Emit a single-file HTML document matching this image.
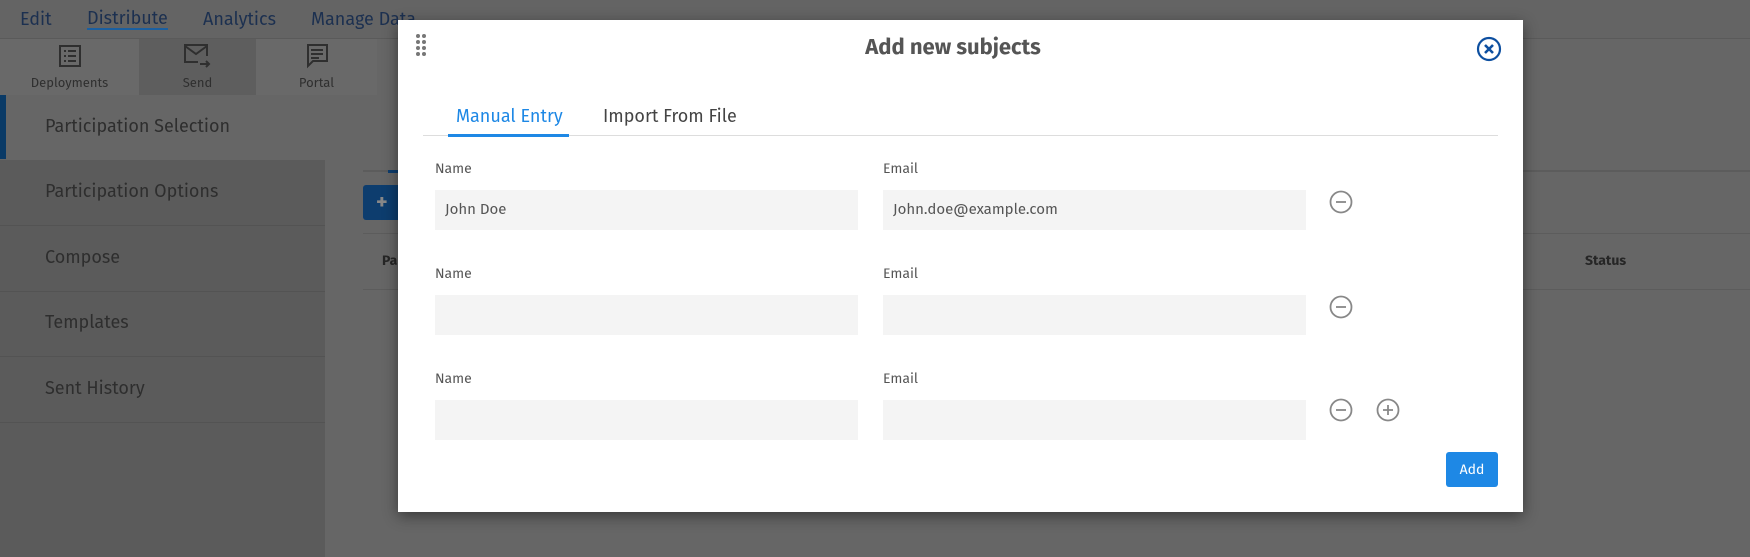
<!DOCTYPE html>
<html><head><meta charset="utf-8"><style>
*{box-sizing:border-box;margin:0;padding:0}
body{width:1750px;height:557px;overflow:hidden;background:#666;font-family:"Fira Sans","Liberation Sans",sans-serif;position:relative}
.abs{position:absolute}
.nav{left:0;top:0;width:1750px;height:39px;background:#646464;border-bottom:1px solid #5a5a5a}
.nav span{position:absolute;top:8px;font-size:18px;color:#1c3050}
.tb{top:39px;height:56px;background:#696969}
.tb .lbl{position:absolute;width:100%;text-align:center;top:37px;font-size:13px;color:#2f2f2f}
.side{left:0;top:160px;width:325px;height:397px;background:#5b5b5b}
.si{position:absolute;left:45px;font-size:18px;color:#2e2e2e}
.hl{position:absolute;left:0;width:325px;height:1px;background:#535353}
.modal{left:398px;top:20px;width:1125px;height:492px;background:#fff;box-shadow:0 4px 14px rgba(0,0,0,.45)}
.lab{position:absolute;font-size:14px;color:#555}
.inp{position:absolute;width:423px;height:40px;background:#f4f4f4;font-size:15px;color:#555;padding:10px 10px}
.dot{position:absolute;width:4px;height:4px;border-radius:50%;background:#777}
</style></head><body>
<div class="abs nav">
<span style="left:20px">Edit</span>
<span style="left:87px;border-bottom:2px solid #1b5fa0;line-height:20px">Distribute</span>
<span style="left:203px">Analytics</span>
<span style="left:311px">Manage Data</span>
</div>
<div class="abs tb" style="left:0;width:139px">
<svg class="abs" style="left:58px;top:5px" width="24" height="24" viewBox="0 0 24 24" fill="none" stroke="#2f2f2f" stroke-width="2"><rect x="2" y="2" width="20" height="20"/><path d="M6 7h2M10 7h8M6 12h2M10 12h8M6 17h2M10 17h8"/></svg>
<div class="lbl">Deployments</div></div>
<div class="abs tb" style="left:139px;width:117px;background:#5e5e5e">
<svg class="abs" style="left:44px;top:4px" width="28" height="26" viewBox="0 0 28 26" fill="none" stroke="#2f2f2f" stroke-width="2"><path d="M15 19H2V2h22v11M2 3l11 8 11-8"/><path d="M17 21h9M23 18l3 3-3 3"/></svg>
<div class="lbl">Send</div></div>
<div class="abs tb" style="left:256px;width:121px">
<svg class="abs" style="left:49px;top:4px" width="24" height="26" viewBox="0 0 24 26" fill="none" stroke="#2f2f2f" stroke-width="2"><path d="M2 2h20v16H8l-5 5V2z"/><path d="M6 7h12M6 11h12M6 15h8"/></svg>
<div class="lbl">Portal</div></div>
<div class="abs" style="left:0;top:95px;width:6px;height:64px;background:#0a3a66"></div>
<div class="si" style="top:115px">Participation Selection</div>
<div class="abs side"></div>
<div class="si" style="top:180px">Participation Options</div>
<div class="hl" style="top:225px"></div>
<div class="si" style="top:246px">Compose</div>
<div class="hl" style="top:291px"></div>
<div class="si" style="top:311px">Templates</div>
<div class="hl" style="top:356px"></div>
<div class="si" style="top:377px">Sent History</div>
<div class="hl" style="top:422px"></div>
<div class="abs" style="left:363px;top:170px;width:1387px;height:2px;background:#5c5c5c"></div>
<div class="abs" style="left:388px;top:170px;width:12px;height:3px;background:#0d3d6e"></div>
<div class="abs" style="left:363px;top:185px;width:40px;height:35px;background:#0d3d6e;border-radius:3px;color:#888;font-size:22px;font-weight:bold;padding-left:13px;line-height:33px">+</div>
<div class="abs" style="left:363px;top:233px;width:1387px;height:1px;background:#5c5c5c"></div>
<div class="abs" style="left:363px;top:289px;width:1387px;height:1px;background:#5c5c5c"></div>
<div class="abs" style="left:382px;top:252px;font-size:14px;font-weight:bold;color:#262626">Pa</div>
<div class="abs" style="left:1585px;top:252px;font-size:14px;font-weight:bold;color:#262626">Status</div>

<div class="abs modal">
<div class="dot" style="left:18px;top:14px"></div><div class="dot" style="left:24px;top:14px"></div>
<div class="dot" style="left:18px;top:20px"></div><div class="dot" style="left:24px;top:20px"></div>
<div class="dot" style="left:18px;top:26px"></div><div class="dot" style="left:24px;top:26px"></div>
<div class="dot" style="left:18px;top:32px"></div><div class="dot" style="left:24px;top:32px"></div>
<div class="abs" style="left:0;width:1110px;text-align:center;top:13px;font-size:22px;font-weight:bold;color:#555">Add new subjects</div>
<svg class="abs" style="left:1078px;top:16px" width="26" height="26" viewBox="0 0 26 26" fill="none" stroke="#0d4fa0" stroke-width="2.2"><circle cx="13" cy="13" r="11"/><path d="M9 9l8 8M17 9l-8 8" stroke-width="2.6"/></svg>
<div class="abs" style="left:58px;top:85px;font-size:18px;color:#1e88e5">Manual Entry</div>
<div class="abs" style="left:205px;top:85px;font-size:18px;color:#444">Import From File</div>
<div class="abs" style="left:25px;top:115px;width:1075px;height:1px;background:#ddd"></div>
<div class="abs" style="left:50px;top:114px;width:121px;height:3px;background:#1e88e5"></div>

<div class="lab" style="left:37px;top:140px">Name</div><div class="lab" style="left:485px;top:140px">Email</div>
<div class="inp" style="left:37px;top:170px">John Doe</div><div class="inp" style="left:485px;top:170px">John.doe@example.com</div>
<div class="lab" style="left:37px;top:245px">Name</div><div class="lab" style="left:485px;top:245px">Email</div>
<div class="inp" style="left:37px;top:275px"></div><div class="inp" style="left:485px;top:275px"></div>
<div class="lab" style="left:37px;top:350px">Name</div><div class="lab" style="left:485px;top:350px">Email</div>
<div class="inp" style="left:37px;top:380px"></div><div class="inp" style="left:485px;top:380px"></div>

<svg class="abs" style="left:930px;top:169px" width="26" height="26" viewBox="0 0 26 26" fill="none" stroke="#888" stroke-width="1.8"><circle cx="13" cy="13" r="10.5"/><path d="M8 13h10"/></svg>
<svg class="abs" style="left:930px;top:274px" width="26" height="26" viewBox="0 0 26 26" fill="none" stroke="#888" stroke-width="1.8"><circle cx="13" cy="13" r="10.5"/><path d="M8 13h10"/></svg>
<svg class="abs" style="left:930px;top:377px" width="26" height="26" viewBox="0 0 26 26" fill="none" stroke="#888" stroke-width="1.8"><circle cx="13" cy="13" r="10.5"/><path d="M8 13h10"/></svg>
<svg class="abs" style="left:977px;top:377px" width="26" height="26" viewBox="0 0 26 26" fill="none" stroke="#888" stroke-width="1.8"><circle cx="13" cy="13" r="10.5"/><path d="M8 13h10M13 8v10"/></svg>
<div class="abs" style="left:1048px;top:432px;width:52px;height:35px;background:#1e88e5;border-radius:3px;color:#fff;font-size:14px;text-align:center;line-height:35px">Add</div>
</div>
</body></html>
